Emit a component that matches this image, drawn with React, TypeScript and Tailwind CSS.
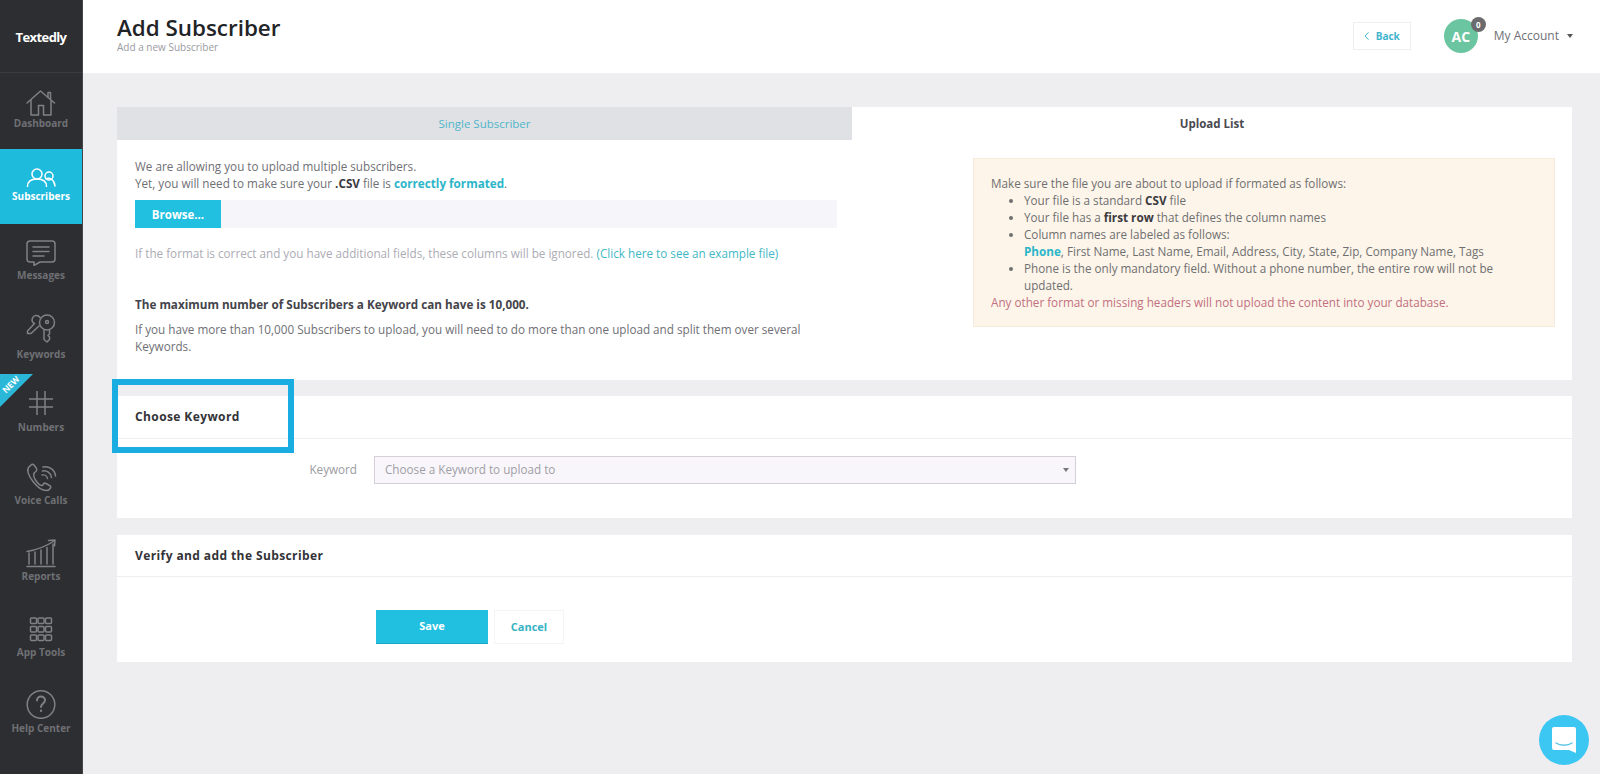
import React from "react";

const S = { fill: "none", stroke: "currentColor", strokeWidth: 1.5, strokeLinecap: "round", strokeLinejoin: "round" } as const;

const HomeIcon = () => (
  <svg viewBox="0 -4 30 30" className="h-[30px] w-[30px] overflow-visible" {...S}>
    <path d="M1 15 14.5 3 28.500 15" />
    <path d="M22 9V4.500h2.500V11" />
    <path d="M5 12.500V27h7.500V17.500h5V27H25V12.500" />
  </svg>
);

const UsersIcon = () => (
  <svg viewBox="0 0 30 30" className="h-[30px] w-[30px]" {...S}>
    <circle cx="11" cy="17" r="5" />
    <circle cx="23" cy="19" r="4" />
    <path d="M1.500 29.500c0-5 4-7.500 9.500-7.500s9.500 2.500 9.500 7.500" />
    <path d="M20 21.800c4-1.500 8.500 1 9 7.200" />
  </svg>
);

const MessageIcon = () => (
  <svg viewBox="0 0 30 30" className="h-[30px] w-[30px]" {...S}>
    <path d="M4 5h22a3 3 0 0 1 3 3v15a3 3 0 0 1-3 3H14l-6 3.500V26H4a3 3 0 0 1-3-3V8a3 3 0 0 1 3-3Z" />
    <path d="M7 11h16M7 15.500h16M7 20h11" />
  </svg>
);

const KeysIcon = () => (
  <svg viewBox="0 0 30 30" className="h-[34px] w-[30px]" {...S}>
    <circle cx="21" cy="9.500" r="7.500" />
    <circle cx="21" cy="9" r="1.500" />
    <path d="M18 17v9.500l3 2.500 2.500-2.500V24L22 22.500l1.500-1.500v-4" />
    <path d="M14 4.500C12 1.500 7.500 2 6.500 5c-1 2.500 0 4.500 2 5.500L1.500 18v2.500H5l8-7.500" />
  </svg>
);

const HashIcon = () => (
  <svg viewBox="0 0 30 30" className="h-[30px] w-[30px]" strokeWidth={1.500} stroke="currentColor" fill="none">
    <path d="M11 3v24M19 3v24M3 11h24M3 19h24" />
  </svg>
);

const PhoneIcon = () => (
  <svg viewBox="0 -2 30 30" className="h-[30px] w-[30px] overflow-visible" {...S}>
    <path d="M5 2 2.500 4.500C1 7 2 12 7 18.500s10.500 9 13.500 9c2 0 3-1 4-2.500.500-1 0-2-1-2.500l-3.500-2c-1-.500-2-.500-2.500.500l-1 1.500c-2 .500-5-2.500-7-5.500S7.500 11 8.500 9.500L10 8.500c1-1 1-2 .500-3L8 2c-.800-1-2-1-3 0Z" />
    <path d="M16 12c2.500-.500 5 1 5.500 3.500" />
    <path d="M16.500 8c4-1 8.500 2 9 6.500" />
    <path d="M17 4c6-1.500 12 3 12.500 9" />
  </svg>
);

const ChartIcon = () => (
  <svg viewBox="0 -2 30 30" className="h-[30px] w-[30px] overflow-visible" {...S}>
    <path d="M1 27.500h28" />
    <path d="M3 25v-11M9 25V13M15 25V11M21 25V8.500M27 25V5" />
    <path d="M1 12.500C10 11 19 8 28 2" />
    <path d="M22.500 1.500 29 1l-.5 6" />
  </svg>
);

const GridIcon = () => (
  <svg viewBox="0 -1 30 30" className="h-[30px] w-[30px] overflow-visible" {...S}>
    {[4, 12.500, 21].map((y) =>
      [4.500, 12, 19.500].map((x) => <rect key={`${x}-${y}`} x={x} y={y} width="6" height="5.500" rx="1" />),
    )}
  </svg>
);

const HelpIcon = () => (
  <svg viewBox="0 0 30 30" className="h-[30px] w-[30px]" {...S}>
    <circle cx="15" cy="15.500" r="13.800" />
    <path d="M11 11.500c0-2.500 2-4 4-4s4 1.500 4 3.800c0 3-4 3.500-4 6.700" strokeWidth={2} />
    <path d="M15 21.500v.5" strokeWidth={2.200} />
  </svg>
);

const navItems = [
  { label: "Dashboard", icon: <HomeIcon />, box: "h-[76px] pt-[11px]" },
  { label: "Subscribers", icon: <UsersIcon />, box: "h-[75px] pt-[8px] bg-[#1fbbdd] text-white", active: true },
  { label: "Messages", icon: <MessageIcon />, box: "h-[79px] pt-[12px]" },
  { label: "Keywords", icon: <KeysIcon />, box: "h-[75px] pt-[8px]" },
  { label: "Numbers", icon: <HashIcon />, box: "h-[73px] pt-[10px]" },
  { label: "Voice Calls", icon: <PhoneIcon />, box: "h-[76px] pt-[10px]" },
  { label: "Reports", icon: <ChartIcon />, box: "h-[76px] pt-[10px]" },
  { label: "App Tools", icon: <GridIcon />, box: "h-[76px] pt-[10px]" },
  { label: "Help Center", icon: <HelpIcon />, box: "h-[76px] pt-[10px]" },
];

function Sidebar() {
  return (
    <aside className="relative h-full w-[83px] shrink-0 border-r border-[#45464a] bg-[#2d2e32] text-[#808185]">
      <div className="flex h-[73px] items-center justify-center border-b border-[#3a3b3f] pt-[3px] text-[13px] font-bold tracking-[-0.6px] text-white">
        Textedly
      </div>
      {navItems.map((item) => (
        <div key={item.label} className={`flex flex-col items-center ${item.box}`}>
          {item.icon}
          <span className={`mt-[2px] text-[10px] leading-[14px] font-bold ${item.active ? "text-white" : "text-[#6f7074]"}`}>
            {item.label}
          </span>
        </div>
      ))}
      {/* ribbon */}
      <div className="absolute top-[374px] left-0 h-[33px] w-[33px] bg-[#2bb8d8] [clip-path:polygon(0_0,100%_0,0_100%)]" />
      <span className="absolute top-[380px] left-[1px] w-[19px] -rotate-45 text-center text-[8.500px] leading-[10px] font-bold text-white">NEW</span>
    </aside>
  );
}

function Header() {
  return (
    <header className="flex h-[73px] shrink-0 justify-between bg-white pr-[27px] pl-[34px]">
      <div className="pt-[14px]">
        <h1 className="text-[22.400px] leading-[28px] font-semibold text-[#222327]">Add Subscriber</h1>
        <p className="-mt-[1px] text-[10px] leading-[12px] text-[#9a9a9f]">Add a new Subscriber</p>
      </div>
      <div className="-mt-[1px] flex items-center">
        <button className="flex h-[28px] w-[58px] items-center justify-center gap-[6px] border border-[#eeeef1] text-[10px] font-bold text-[#3fb3cc]">
          <svg viewBox="0 0 8 12" className="h-[10px] w-[6px]" fill="none" stroke="currentColor" strokeWidth="1.300">
            <path d="M6 1 1.500 6 6 11" />
          </svg>
          Back
        </button>
        <div className="relative ml-[33px] flex h-[34px] w-[34px] items-center justify-center rounded-full bg-[#6cc5a1] text-[14px] font-bold text-white">
          AC
          <span className="absolute -top-[2px] -right-[8px] flex h-[15px] w-[15px] items-center justify-center rounded-full bg-[#6b6b6d] text-[8px] font-bold">0</span>
        </div>
        <span className="ml-[16px] text-[12px] text-[#6f6f75]">My Account</span>
        <span className="ml-[8px] h-0 w-0 border-x-[3.500px] border-t-[4px] border-x-transparent border-t-[#55555a]" />
      </div>
    </header>
  );
}

function UploadCard() {
  return (
    <div className="h-[273px] shrink-0">
      <div className="flex h-[33px] text-[11.500px]">
        <div className="flex w-[735px] items-center justify-center bg-[#e0e1e5] text-[#4fb6c9]">Single Subscriber</div>
        <div className="flex flex-1 items-center justify-center bg-white pt-[1px] font-bold text-[#4a4a50]">Upload List</div>
      </div>
      <div className="flex h-[240px] bg-white text-[11.700px] leading-[17px] text-[#6f6f75]">
        <div className="w-[735px] shrink-0 pt-[18px] pr-[15px] pl-[18px]">
          <p>We are allowing you to upload multiple subscribers.</p>
          <p>
            Yet, you will need to make sure your <b className="font-bold text-[#3a3a40]">.CSV</b> file is{" "}
            <b className="font-bold text-[#2cb5c9]">correctly formated</b>.
          </p>
          <div className="mt-[8px] flex h-[28px] bg-[#f6f5f9]">
            <button className="h-full w-[86px] bg-[#22c0e0] text-[11.500px] font-bold text-white">Browse...</button>
          </div>
          <p className="mt-[17px] text-[#acacb4]">
            If the format is correct and you have additional fields, these columns will be ignored.{" "}
            <span className="text-[#3fb8c6]">(Click here to see an example file)</span>
          </p>
          <p className="mt-[34px] font-bold text-[#44444a]">The maximum number of Subscribers a Keyword can have is 10,000.</p>
          <p className="mt-[8px]">
            If you have more than 10,000 Subscribers to upload, you will need to do more than one upload and split them over several Keywords.
          </p>
        </div>
        <div className="flex-1 pt-[18px] pr-[17px] pl-[121px]">
          <div className="h-[169px] border border-[#f6eadb] bg-[#fdf5ea] pt-[16px] pl-[17px] text-[#6f6f70]">
            <p>Make sure the file you are about to upload if formated as follows:</p>
            <ul className="list-disc pl-[33px]">
              <li>Your file is a standard <b className="font-bold text-[#3a3a40]">CSV</b> file</li>
              <li>Your file has a <b className="font-bold text-[#3a3a40]">first row</b> that defines the column names</li>
              <li>
                Column names are labeled as follows:
                <br />
                <b className="font-bold text-[#2cb5c9]">Phone</b>, First Name, Last Name, Email, Address, City, State, Zip, Company Name, Tags
              </li>
              <li className="pr-[50px]">Phone is the only mandatory field. Without a phone number, the entire row will not be updated.</li>
            </ul>
            <p className="text-[#c2707f]">Any other format or missing headers will not upload the content into your database.</p>
          </div>
        </div>
      </div>
    </div>
  );
}

function SectionHeader({ title, tall }: { title: string; tall?: boolean }) {
  return (
    <div className={`flex items-center border-b border-[#eeeef1] pl-[18px] text-[12px] font-bold tracking-[0.4px] text-[#333338] ${tall ? "h-[43px] pb-[1px]" : "h-[42px]"}`}>
      {title}
    </div>
  );
}

function ChooseKeywordCard() {
  return (
    <section className="mt-[16px] h-[122px] shrink-0 bg-white">
      <SectionHeader title="Choose Keyword" tall />
      <div className="mt-[17px] flex items-center">
        <label className="w-[257px] pr-[17px] text-right text-[11.700px] text-[#9b9ba2]">Keyword</label>
        <div className="flex h-[28px] w-[702px] items-center justify-between border border-[#d4cfd9] bg-[#f9f6fb] pr-[6px] pl-[10px] text-[11.700px] text-[#9f9fa6]">
          Choose a Keyword to upload to
          <span className="h-0 w-0 border-x-[3.500px] border-t-[4px] border-x-transparent border-t-[#77777c]" />
        </div>
      </div>
    </section>
  );
}

function VerifyCard() {
  return (
    <section className="mt-[17px] h-[127px] shrink-0 bg-white">
      <SectionHeader title="Verify and add the Subscriber" />
      <div className="mt-[33px] ml-[259px] flex gap-[6px] text-[11px] font-bold">
        <button className="h-[34px] w-[112px] border-b border-[#1aa8c6] bg-[#22c0e0] text-white">Save</button>
        <button className="h-[34px] w-[70px] border border-[#f4f3f6] bg-white text-[#35b3c4]">Cancel</button>
      </div>
    </section>
  );
}

export default function App() {
  return (
    <div className="relative flex h-screen overflow-hidden bg-[#eeeef1] font-['Open_Sans',sans-serif]">
      <Sidebar />
      <main className="flex min-w-0 flex-1 flex-col">
        <Header />
        <div className="flex flex-1 flex-col pt-[34px] pr-[28px] pl-[34px]">
          <UploadCard />
          <ChooseKeywordCard />
          <VerifyCard />
        </div>
      </main>

      {/* highlight round the section title */}
      <div className="pointer-events-none absolute top-[379px] left-[112px] h-[74px] w-[182px] border-[6px] border-[#19ade2]" />

      {/* chat launcher */}
      <div className="absolute top-[715px] left-[1539px] flex h-[50px] w-[50px] items-center justify-center rounded-full bg-[#3cc6f2]">
        <svg viewBox="0 0 24 26" className="h-[26px] w-[24px]">
          <path d="M2 0h20a2 2 0 0 1 2 2v24l-7-3H2a2 2 0 0 1-2-2V2a2 2 0 0 1 2-2Z" fill="#fff" />
          <path d="M4 16c4 3 12 3 16 0" fill="none" stroke="#5cc4e4" strokeWidth="1.300" strokeLinecap="round" />
        </svg>
      </div>
    </div>
  );
}
